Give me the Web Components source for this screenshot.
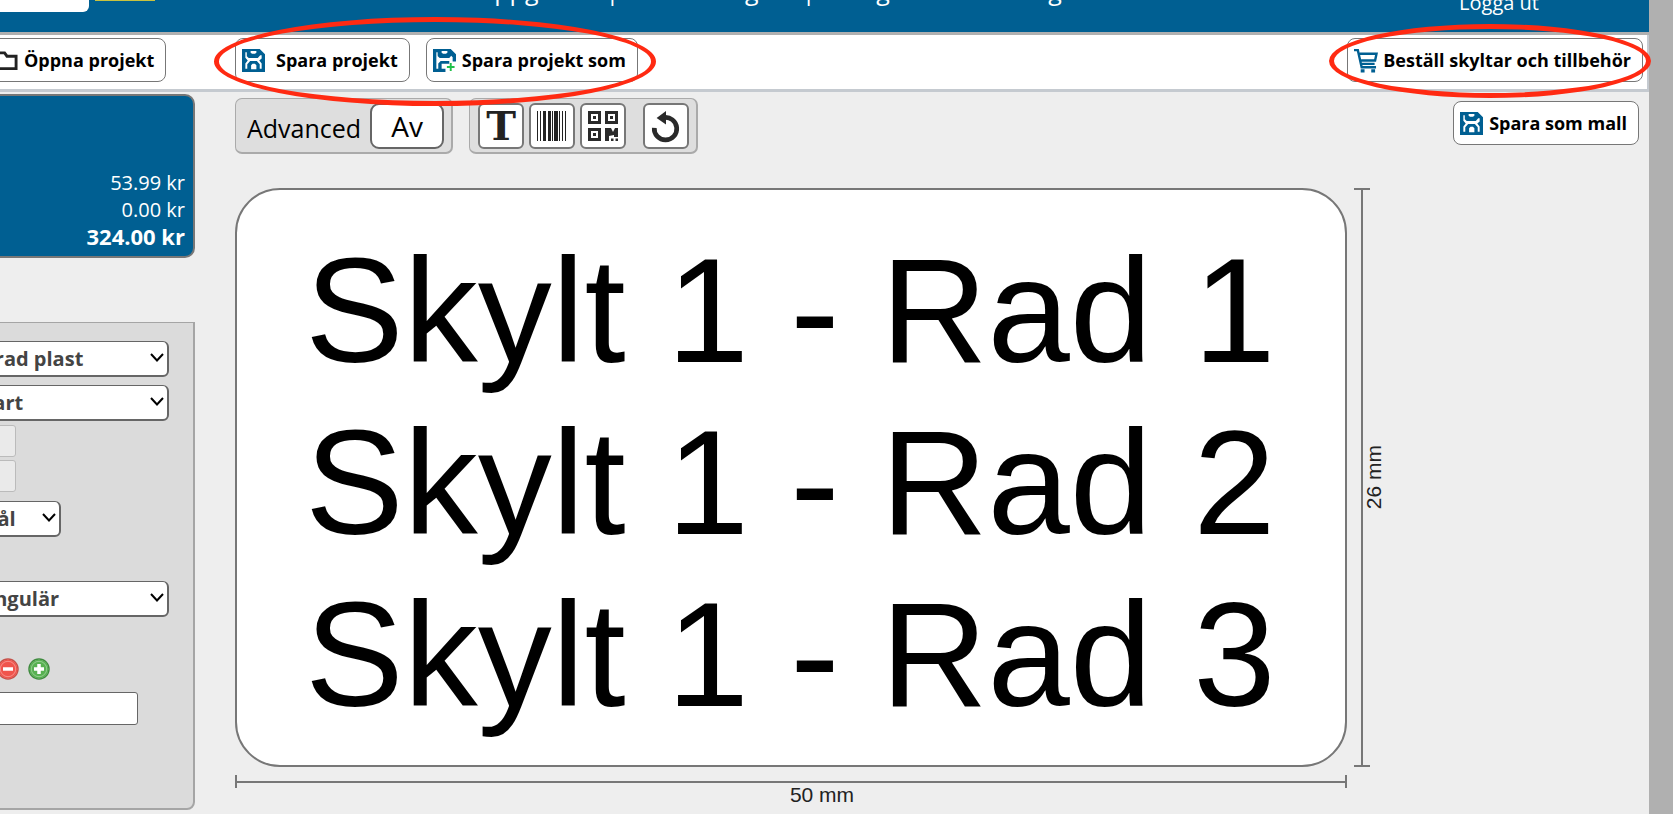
<!DOCTYPE html>
<html lang="sv">
<head>
<meta charset="utf-8">
<title>Skyltdesigner</title>
<style>
body { margin: 0; background: #eee; font-family: "Open Sans", "Noto Sans", sans-serif; color: #000; }
</style>
</head>
<body>
<sign-app></sign-app>
<script>
function define(name, html, setup) {
  const template = document.createElement('template');
  template.innerHTML = html;
  customElements.define(name, class extends HTMLElement {
    connectedCallback() {
      if (this.shadowRoot) return;
      const root = this.attachShadow({ mode: 'open' });
      root.append(template.content.cloneNode(true));
      if (setup) setup(this, root);
    }
  });
}

const ICONS = {
  folder: '<path d="M1.500 5V20.500H22V7.500H12.500L10 4H1.500Z" fill="none" stroke="#222" stroke-width="3"/>',
  save: '<path fill="#005f92" d="M0 0H18.500L24 5.500V24H0Z"/><path fill="#fff" d="M3.500 3.500H5V7.500L7 9.500H16.500L19 6.500H20.500V10L18 12L20.500 15V20.500H18.500V16L15.500 12.500H8.500L5.500 16V20.500H3.500V15L6 12L3.500 9ZM9 2H15V4L13.500 5H10.500L9 4ZM9.500 21V17L11 15.500H13.500L15 17V21Z"/>',
  saveas: '<path fill="#005f92" fill-rule="evenodd" d="M0 0H18.500L24 5.500V13H20.500V8.500L19 7L17 9.500H7L5 7.500V3.500H3.500V20.500H5.500V15L8 12.500H17V15.500H9V20.500H13V24H0Z"/><path fill="#005f92" d="M5 0H18V7H5Z"/><path fill="#fff" d="M9 2H15V4L13.500 5H10.500L9 4Z"/><path d="M18.500 14.500V23M14.500 18.800H22.500" stroke="#1fc04a" stroke-width="2"/>',
  cart: '<path d="M0 1.200H4L8 19H23M6 5H23.500L22 12H7.500M8 15.500H21.500" fill="none" stroke="#005f92" stroke-width="2.500"/><path fill="#005f92" d="M7 21H11V24.500H7ZM18 21H22V24.500H18Z"/>',
  barcode: '<path fill="#222" d="M0 0h1v30H0zM3 0h1v30H3zM6 0h3v30H6zM11 0h3v30h-3zM15 0h1v30h-1zM17 0h4v30h-4zM22 0h1v30h-1zM25 0h1v30h-1zM28 0h1v30h-1z"/>',
  qr: '<path fill="none" stroke="#2a2a2a" stroke-width="3" d="M1.500 1.500h10v10h-10zM18.500 1.500h10v10h-10zM1.500 18.500h10v10h-10z"/><path fill="#2a2a2a" d="M5 5h3v3H5zM22 5h3v3h-3zM5 22h3v3H5zM17 17h6l2 4 2-4h3v9h-4v-2l-5 1v5h-4zM23 27.500h2.500v2.500H23zM27.500 27.500H30v2.500h-2.500z"/>',
  undo: '<path fill="none" stroke="#2a2a2a" stroke-width="5" d="M2.500 18A12 12 0 1 0 12.500 7"/><path fill="#2a2a2a" d="M5 7.500L15 0V14.500Z"/>'
};

define('app-icon', `
<style>:host{display:block;flex:none;width:var(--icon,23px);height:var(--icon,23px)} svg{display:block;width:100%;height:100%;overflow:visible}</style>
<svg aria-hidden="true"></svg>`, (host, root) => {
  const svg = root.querySelector('svg');
  svg.setAttribute('viewBox', '0 0 ' + (host.getAttribute('box') || '24 24'));
  svg.innerHTML = ICONS[host.getAttribute('name')];
});

define('action-button', `
<style>
:host{display:block}
button{display:flex;align-items:center;gap:var(--gap,6px);box-sizing:border-box;height:44px;padding:0 11px 0 6px;border:1px solid #777;border-radius:8px;background:#fff;color:#000;font:700 18px/24px "Open Sans","Noto Sans",sans-serif;white-space:nowrap}
</style>
<button type="button"><slot name="icon"></slot><slot></slot></button>`);

define('ring-mark', `
<style>
:host{display:block;position:absolute;inset:var(--inset);pointer-events:none;z-index:2;border:5px solid #ff2a12;border-radius:50%}
</style>`);

define('top-header', `
<style>
:host{display:flex;justify-content:space-between;align-items:flex-start;box-sizing:border-box;height:35px;overflow:hidden;background:#005f92;border-bottom:3px solid #b0b0b0;color:#fff}
.brand{flex:none;display:flex;gap:6px;width:347px}
.logo{width:89px;height:12px;background:#fff;border-radius:0 0 6px 0}
.line{width:60px;height:1px;background:#c9c23f}
nav{flex:1;display:flex;font-size:25px;line-height:32px;margin-top:-26px;white-space:nowrap}
a{color:#fff;text-decoration:none}
.sep{width:52px;text-align:center}
.out{flex:none;font-size:20px;line-height:28px;margin:-11px 110px 0 0}
</style>
<div class="brand"><div class="logo"></div><div class="line"></div></div>
<nav><a href="#">Mina kontouppgifter</a><span class="sep">|</span><a href="#">Inställningar</a><span class="sep">|</span><a href="#">Tidigare beställningar</a></nav>
<a class="out" href="#">Logga ut</a>`);

define('project-bar', `
<style>
:host{display:flex;align-items:flex-start;box-sizing:border-box;height:57px;padding:3px 4px 0 0;background:#fff;border-bottom:3px solid #c5cad0;border-right:2px solid #c5cad0}
.open{flex:none;width:247px;margin-left:-12px}
.open action-button{width:max-content}
.group{position:relative;display:flex;gap:16px}
.save{--inset:-21px -18px -24px -21px}
.order{margin-left:auto;--inset:-14px -8px -16px -18px}
.wide{--gap:11px}
</style>
<div class="open"><action-button><app-icon slot="icon" name="folder"></app-icon>Öppna projekt</action-button></div>
<div class="group save">
<action-button class="wide"><app-icon slot="icon" name="save"></app-icon>Spara projekt</action-button>
<action-button><app-icon slot="icon" name="saveas"></app-icon>Spara projekt som</action-button>
<ring-mark></ring-mark></div>
<div class="group order"><action-button><app-icon slot="icon" name="cart"></app-icon>Beställ skyltar och tillbehör</action-button>
<ring-mark></ring-mark></div>`);

define('price-card', `
<style>
:host{display:block;box-sizing:border-box;height:164px;padding:73px 8px 0 0;border:2px solid #777;border-radius:0 10px 10px 0;background:#005f92;color:#fff;font-size:20px;line-height:27px;text-align:right}
p{margin:0} strong{font-size:22px}
</style>
<p>53.99 kr</p><p>0.00 kr</p><p><strong>324.00 kr</strong></p>`);

define('select-field', `
<style>
:host{display:block;position:relative}
select{appearance:none;display:block;box-sizing:border-box;width:100%;height:36px;padding:0 0 0 4px;border:2px solid #666;border-width:1px 2px 2px;border-radius:6px;background:#fff;color:#444;font:700 20px/28px "Open Sans","Noto Sans",sans-serif}
svg{position:absolute;right:5px;top:12px;width:14px;height:9px;pointer-events:none}
</style>
<select></select><svg viewBox="0 0 14 9" aria-hidden="true"><path d="M1 1L7 7.500L13 1" fill="none" stroke="#000" stroke-width="2"/></svg>`, (host, root) => {
  const select = root.querySelector('select');
  select.setAttribute('aria-label', host.getAttribute('label'));
  select.add(new Option(host.getAttribute('value')));
});

define('round-button', `
<style>
:host{display:block} button{display:block;width:22px;height:22px;padding:0;border:0;background:none} svg{display:block;width:22px;height:22px}
</style>
<button type="button"><svg viewBox="0 0 22 22"><circle class="edge" cx="11" cy="11" r="10" stroke-width="1.500"/><circle class="core" cx="11" cy="11" r="9.500"/><circle cx="11" cy="11" r="7.700" fill="none" stroke="#fff" stroke-opacity=".35"/><path class="sign" stroke="#fff" stroke-width="3.500"/></svg></button>`, (host, root) => {
  const plus = host.getAttribute('kind') === 'plus';
  root.querySelector('button').setAttribute('aria-label', plus ? 'Lägg till' : 'Ta bort');
  root.querySelector('.edge').setAttribute('stroke', plus ? '#3f8a3f' : '#c4524a');
  root.querySelector('.edge').setAttribute('fill', 'none');
  root.querySelector('.core').setAttribute('fill', plus ? '#58b152' : '#f0544c');
  root.querySelector('.sign').setAttribute('d', plus ? 'M11 6V16M6 11H16' : 'M6 11H16');
});

define('sign-settings', `
<style>
:host{display:flex;flex-direction:column;align-items:flex-start;box-sizing:border-box;height:488px;padding:18px 0 0 8px;border:2px solid #a5a5a5;border-width:1px 2px 2px;border-radius:0 0 8px 0;background:#dbdbdb}
.long{width:239px}
.color{margin:8px 0 4px}
.short{width:131px;margin:6px 0 44px}
input{box-sizing:border-box;height:32px;margin:0 0 3px;padding:0 8px;border:1px solid #bbb;border-radius:3px;background:#eaeaea;width:86px}
.row{display:flex;gap:9px;margin:41px 0 12px;padding-left:67px}
.name{width:208px;height:33px;border-color:#666;background:#fff}
</style>
<select-field class="long" label="Material" value="Graverad plast"></select-field>
<select-field class="long color" label="Färg" value="Vit/svart"></select-field>
<input aria-label="Bredd" disabled><input aria-label="Höjd" disabled>
<select-field class="short" label="Hål" value="Inga hål"></select-field>
<select-field class="long" label="Form" value="Rektangulär"></select-field>
<div class="row"><round-button kind="minus"></round-button><round-button kind="plus"></round-button></div>
<input class="name" aria-label="Antal">`);

define('tool-button', `
<style>
:host{display:block}
button{display:flex;align-items:center;justify-content:center;box-sizing:border-box;min-width:46px;height:46px;padding:0;border:2px solid #777;border-radius:6px;background:#fff;color:#222}
</style>
<button type="button"><slot></slot></button>`, (host, root) => root.querySelector('button').setAttribute('aria-label', host.getAttribute('label')));

define('editor-tools', `
<style>
:host{display:flex;gap:16px;align-items:flex-start}
.group{display:flex;align-items:center;box-sizing:border-box;height:56px;border:2px solid #aaa;border-width:1px 2px 2px 1px;border-radius:7px;background:#dedede}
.adv{gap:9px;padding:0 7px 0 11px;font-size:25px;line-height:32px}
.adv span{padding-top:4px}
.state{box-sizing:border-box;width:74px;height:46px;padding:0;border:2px solid #666;border-radius:9px;background:#fff;color:#000;font:400 28px/32px "Open Sans","Noto Sans",sans-serif}
.tools{gap:5px;padding:0 7px 0 8px;--icon:30px}
.far{margin-left:12px}
.t{font:700 40px/40px "DejaVu Serif",serif}
action-button{margin:3px 10px 0 auto}
</style>
<div class="group adv"><span id="adv">Advanced</span><button class="state" type="button" aria-describedby="adv">Av</button></div>
<div class="group tools">
<tool-button label="Text"><span class="t">T</span></tool-button>
<tool-button label="Streckkod"><app-icon name="barcode" box="30 30"></app-icon></tool-button>
<tool-button label="QR-kod"><app-icon name="qr" box="30 30"></app-icon></tool-button>
<tool-button class="far" label="Återställ"><app-icon name="undo" box="30 32"></app-icon></tool-button>
</div>
<action-button><app-icon slot="icon" name="save"></app-icon>Spara som mall</action-button>`);

define('sign-canvas', `
<style>
:host{display:grid;grid-template-columns:1fr 28px;column-gap:7px;row-gap:8px;margin:34px 267px 0 0;font:400 21px/22px "Liberation Sans",Arial,sans-serif;color:#222}
.sign{display:flex;flex-direction:column;justify-content:center;align-items:center;box-sizing:border-box;height:579px;padding-top:10px;border:2px solid #777;border-radius:45px;background:#fff;color:#000;font-size:148px;line-height:172px;white-space:pre}
.sign div{width:972px}
.v{display:flex;align-items:center}
.v .bar{flex:none;box-sizing:border-box;width:16px;height:100%;border:solid #777;border-width:2px 0;background:linear-gradient(#777,#777) center/2px 100% no-repeat}
.v span{flex:none;writing-mode:vertical-rl;rotate:180deg;line-height:16px;margin-left:-4px}
.h .bar{box-sizing:border-box;height:13px;border:solid #777;border-width:0 2px;background:linear-gradient(#777,#777) center/100% 2px no-repeat}
.h span{display:block;margin-top:-4px;padding-left:62px;text-align:center}
</style>
<div class="sign"><div>Skylt 1 - Rad 1</div><div>Skylt 1 - Rad 2</div><div>Skylt 1 - Rad 3</div></div>
<div class="v"><div class="bar"></div><span>26 mm</span></div>
<div class="h"><div class="bar"></div><span>50 mm</span></div>`);

define('sign-app', `
<style>
:host{display:flex;min-height:100vh;overflow:hidden}
.page{flex:1;min-width:0}
.gutter{flex:none;width:24px;background:#b0b0b0}
.main{display:flex;gap:40px}
aside{flex:none;width:275px;margin:2px 0 0 -80px}
sign-settings{margin-top:64px}
section{flex:1;min-width:0;padding-top:6px}
</style>
<div class="page"><top-header></top-header><project-bar></project-bar>
<div class="main"><aside><price-card></price-card><sign-settings></sign-settings></aside>
<section><editor-tools></editor-tools><sign-canvas></sign-canvas></section></div></div>
<div class="gutter"></div>`);
</script>
</body>
</html>
